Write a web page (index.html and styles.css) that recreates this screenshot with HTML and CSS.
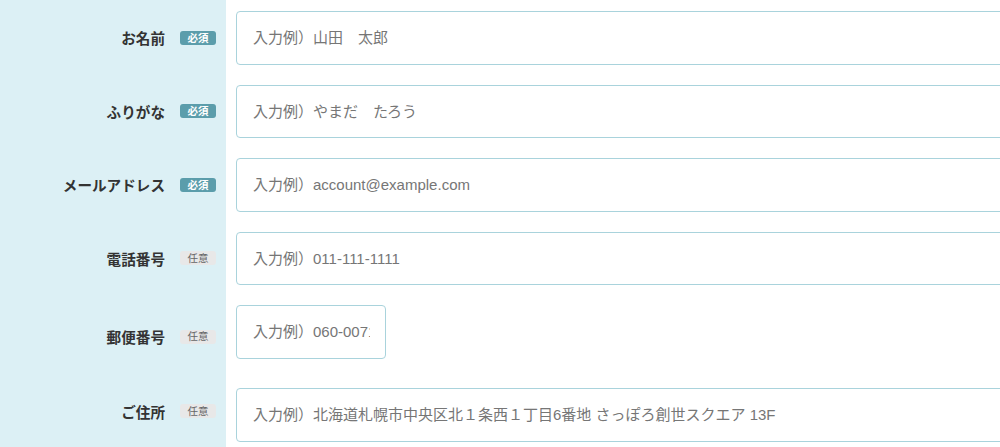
FILE: index.html
```html
<!DOCTYPE html>
<html lang="ja">
<head>
<meta charset="utf-8">
<title>お問い合わせフォーム</title>
<link rel="stylesheet" href="styles.css">
</head>
<body>
<form class="form">
  <div class="row">
    <div class="label-cell"><span class="label">お名前</span><span class="badge badge-required">必須</span></div>
    <div class="field-cell"><input class="input" type="text" placeholder="入力例）山田　太郎"></div>
  </div>
  <div class="row">
    <div class="label-cell"><span class="label">ふりがな</span><span class="badge badge-required">必須</span></div>
    <div class="field-cell"><input class="input" type="text" placeholder="入力例）やまだ　たろう"></div>
  </div>
  <div class="row">
    <div class="label-cell"><span class="label">メールアドレス</span><span class="badge badge-required">必須</span></div>
    <div class="field-cell"><input class="input" type="email" placeholder="入力例）account@example.com"></div>
  </div>
  <div class="row">
    <div class="label-cell"><span class="label">電話番号</span><span class="badge badge-optional">任意</span></div>
    <div class="field-cell"><input class="input" type="tel" placeholder="入力例）011-111-1111"></div>
  </div>
  <div class="row row-postal">
    <div class="label-cell"><span class="label">郵便番号</span><span class="badge badge-optional">任意</span></div>
    <div class="field-cell"><input class="input input-short" type="text" placeholder="入力例）060-0071"></div>
  </div>
  <div class="row row-address">
    <div class="label-cell"><span class="label">ご住所</span><span class="badge badge-optional">任意</span></div>
    <div class="field-cell"><input class="input" type="text" placeholder="入力例）北海道札幌市中央区北１条西１丁目6番地 さっぽろ創世スクエア 13F"></div>
  </div>
</form>
</body>
</html>
```
FILE: styles.css
```css
html, body {
  margin: 0;
  padding: 0;
  overflow: hidden;
  background: #ffffff;
}
body {
  font-family: "Liberation Sans", "Noto Sans CJK JP", sans-serif;
  color: #333333;
}
.form {
  display: flex;
  flex-direction: column;
  padding-top: 1px;
  background: linear-gradient(to right, #dcf0f5 0, #dcf0f5 226px, #ffffff 226px);
  min-height: 460px;
}
.row {
  display: grid;
  grid-template-columns: 226px 1fr;
}
.label-cell {
  display: flex;
  align-items: center;
  justify-content: flex-end;
  padding-right: 10px;
  gap: 15px;
}
.label {
  font-size: 14.6px;
  font-weight: bold;
  color: #333333;
  font-family: "Noto Sans CJK JP", sans-serif;
}
.badge {
  display: inline-flex;
  align-items: center;
  justify-content: center;
  width: 36px;
  height: 14px;
  border-radius: 3px;
  font-size: 10.5px;
  font-weight: bold;
  font-family: "Noto Sans CJK JP", sans-serif;
  line-height: 1;
}
.badge-required {
  background: #5b9dab;
  color: #ffffff;
}
.badge-optional {
  background: #e8e8e8;
  color: #666666;
  font-weight: normal;
}
.field-cell {
  padding: 10px 0 10px 10px;
  overflow: hidden;
}
.input {
  box-sizing: border-box;
  display: block;
  width: 800px;
  height: 53.5px;
  margin: 0;
  padding: 0 15px 0 16px;
  border: 1px solid #a9d3dc;
  border-radius: 4px;
  background: #ffffff;
  font-family: "Liberation Sans", "Noto Sans CJK JP", sans-serif;
  font-size: 15px;
  color: #333333;
  outline: none;
}
.input::placeholder {
  color: #767676;
}
.input-short {
  width: 150px;
}
.row-postal .field-cell {
  padding-bottom: 19.5px;
}
.row-address .label-cell {
  padding-bottom: 7px;
}
```
